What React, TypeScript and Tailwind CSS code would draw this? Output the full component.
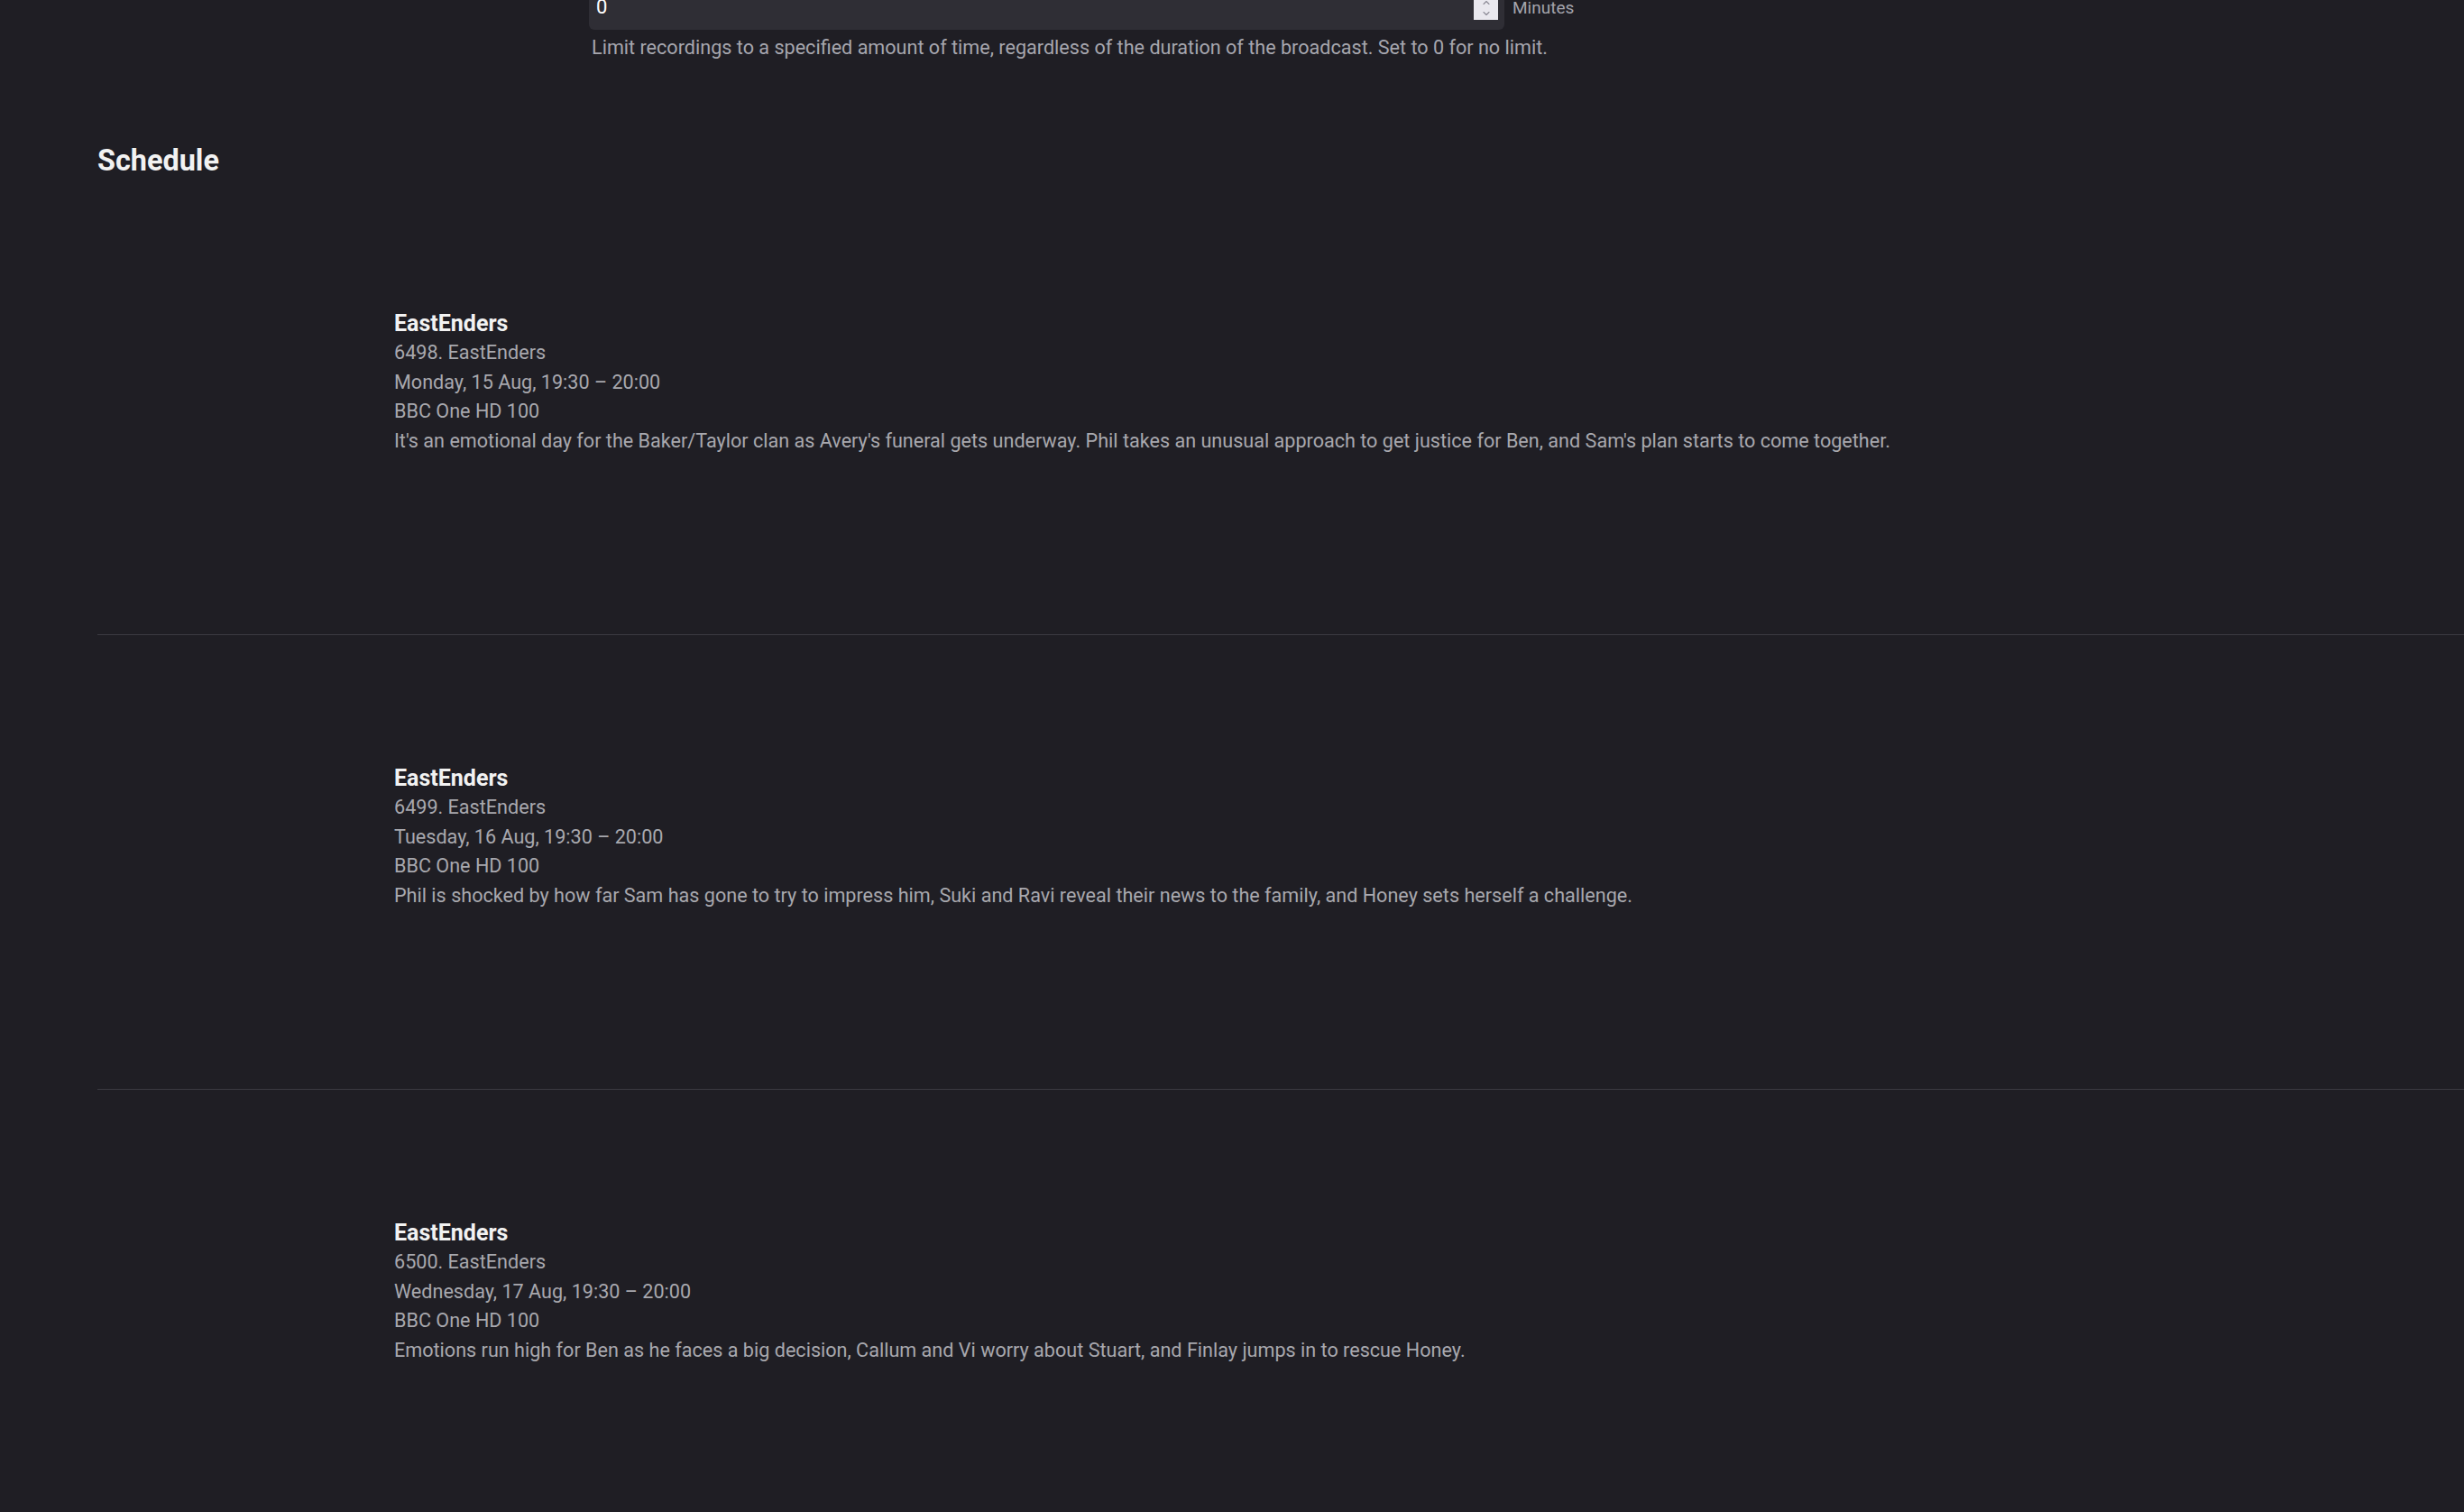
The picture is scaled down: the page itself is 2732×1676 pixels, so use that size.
import { ChevronDown, ChevronUp } from "lucide-react";

// 予約一覧のデータ
const episodes = [
  {
    title: "EastEnders",
    episode: "6498. EastEnders",
    time: "Monday, 15 Aug, 19:30 – 20:00",
    channel: "BBC One HD 100",
    overview:
      "It's an emotional day for the Baker/Taylor clan as Avery's funeral gets underway. Phil takes an unusual approach to get justice for Ben, and Sam's plan starts to come together.",
  },
  {
    title: "EastEnders",
    episode: "6499. EastEnders",
    time: "Tuesday, 16 Aug, 19:30 – 20:00",
    channel: "BBC One HD 100",
    overview:
      "Phil is shocked by how far Sam has gone to try to impress him, Suki and Ravi reveal their news to the family, and Honey sets herself a challenge.",
  },
  {
    title: "EastEnders",
    episode: "6500. EastEnders",
    time: "Wednesday, 17 Aug, 19:30 – 20:00",
    channel: "BBC One HD 100",
    overview:
      "Emotions run high for Ben as he faces a big decision, Callum and Vi worry about Stuart, and Finlay jumps in to rescue Honey.",
  },
];

export default function App() {
  return (
    <div className="w-full h-[1676px] overflow-hidden bg-[#1f1e24] font-['Roboto','Liberation_Sans',sans-serif]">
      {/* 録画時間の上限 */}
      <div className="pl-[653px]">
        <div className="flex items-start">
          <div className="relative -mt-[24px] h-[57px] w-[1015px] rounded-md bg-[#2f2e35] pl-[8px] pt-[19px] text-[22px] leading-[26px] text-white">
            0
            <div className="absolute right-[7px] bottom-[11px] flex h-[34px] w-[27px] flex-col items-center justify-end bg-[#e9e8ee] pb-[1px] text-[#8b8a95]">
              <ChevronUp size={12} strokeWidth={2.2} />
              <ChevronDown size={12} strokeWidth={2.2} />
            </div>
          </div>
          <span className="ml-[9px] -mt-[1px] text-[19px] leading-none text-[#a4a4ac]">Minutes</span>
        </div>
        <p className="mt-[4px] pl-[3px] text-[21.6px] leading-[32px] text-[#a6a6ae]">
          Limit recordings to a specified amount of time, regardless of the duration of the broadcast. Set to 0 for no limit.
        </p>
      </div>

      {/* スケジュール */}
      <div className="pl-[108px]">
        <h2 className="mt-[90px] text-[32.4px] font-bold leading-[38px] text-[#f2f2f2]">Schedule</h2>
        <div className="mt-[3px]">
          {episodes.map((ep) => (
            <div key={ep.episode} className="h-[504px] border-b border-[#3b3a41] pl-[329px] pt-[142px]">
              <div className="text-[25px] font-bold leading-[33px] text-[#f2f2f2]">{ep.title}</div>
              <div className="text-[21.6px] leading-[32.7px] text-[#a8a8ae]">
                <div>{ep.episode}</div>
                <div>{ep.time}</div>
                <div>{ep.channel}</div>
                <div>{ep.overview}</div>
              </div>
            </div>
          ))}
        </div>
      </div>
    </div>
  );
}
